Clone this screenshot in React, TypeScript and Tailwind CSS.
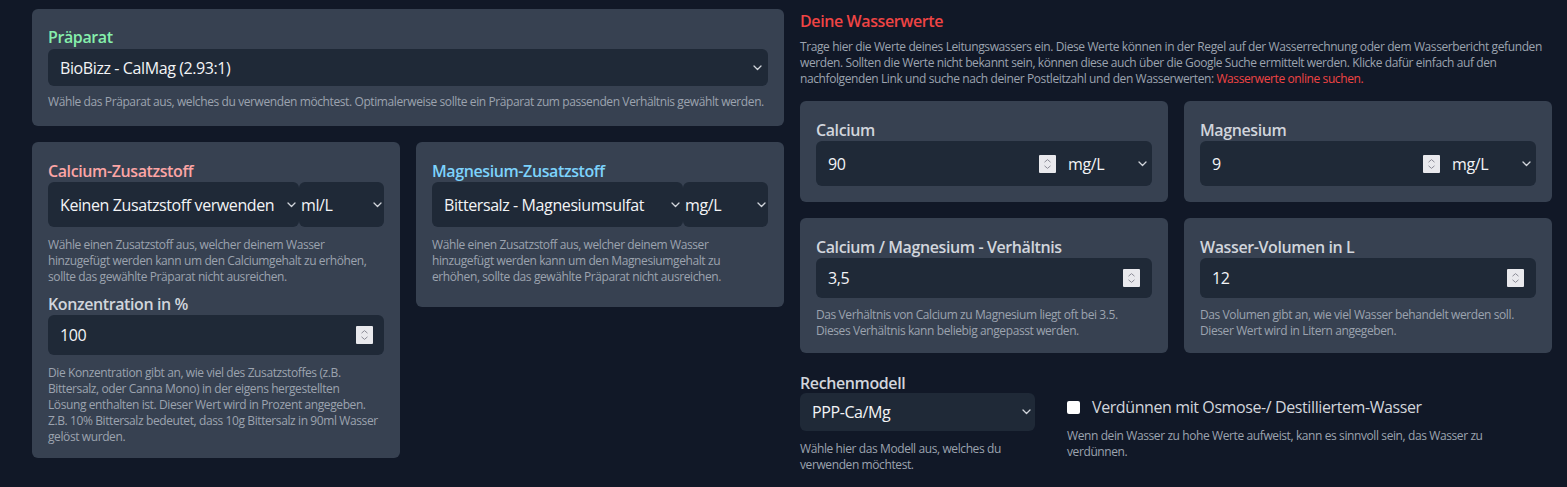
import React from "react";

function Chevron() {
  return (
    <svg width="9" height="6" viewBox="0 0 9 6" aria-hidden="true">
      <path d="M1 1l3.5 3.5L8 1" stroke="#d1d5db" strokeWidth="1.3" fill="none" strokeLinecap="round" strokeLinejoin="round" />
    </svg>
  );
}

function Spinner() {
  return (
    <span className="pointer-events-none flex h-[18px] w-[17px] items-center justify-center rounded-[1px] bg-[#e9e9ed]">
      <svg width="17" height="18" viewBox="0 0 17 18" aria-hidden="true">
        <path d="M5.5 7.2L8.5 4.6l3 2.6" stroke="#8c8c97" strokeWidth="1" fill="none" />
        <path d="M5.5 10.8L8.5 13.4l3-2.6" stroke="#8c8c97" strokeWidth="1" fill="none" />
      </svg>
    </span>
  );
}

function Help({ children, className }: { children: React.ReactNode; className: string }) {
  return <p className={`text-[12px] leading-4 text-[#9ca3af] ${className}`}>{children}</p>;
}

export default function App() {
  return (
    <div className="min-h-screen bg-[#111827] pl-8 pr-[15px] pt-[9px] font-['Open_Sans',sans-serif] tracking-[-0.025em] text-gray-300">
      <div className="flex items-start gap-4">
        {/* LEFT COLUMN */}
        <div className="flex w-[752px] flex-col gap-4">
          <section className="rounded-md bg-[#374151] px-4 pb-4 pt-[18px]">
            <label className="block text-[16px] font-semibold leading-[21px] text-[#86efac]">Präparat</label>
            <div className="relative mt-[1px] h-[37px]">
              <select
                defaultValue="biobizz"
                className="h-full w-full appearance-none rounded-md bg-[#1f2937] pl-3 pr-8 text-[16px] text-gray-100 outline-none"
              >
                <option value="biobizz">BioBizz - CalMag (2.93:1)</option>
              </select>
              <span className="pointer-events-none absolute right-[6px] top-[16px]">
                <Chevron />
              </span>
            </div>
            <Help className="mt-2">
              Wähle das Präparat aus, welches du verwenden möchtest. Optimalerweise sollte ein Präparat zum passenden Verhältnis gewählt werden.
            </Help>
          </section>

          <div className="flex items-start gap-4">
            <section className="w-[368px] rounded-md bg-[#374151] px-4 pb-[13px] pt-[19px]">
              <label className="block text-[16px] font-semibold leading-[21px] text-[#fca5a5]">Calcium-Zusatzstoff</label>
              <div className="flex h-[45px]">
                <div className="relative h-full w-[251px]">
                  <select
                    defaultValue="none"
                    className="h-full w-full appearance-none rounded-md bg-[#1f2937] pl-3 pr-6 text-[16px] text-gray-100 outline-none"
                  >
                    <option value="none">Keinen Zusatzstoff verwenden</option>
                  </select>
                  <span className="pointer-events-none absolute right-[3px] top-[20px]">
                    <Chevron />
                  </span>
                </div>
                <div className="relative h-full flex-1">
                  <select
                    defaultValue="ml"
                    className="h-full w-full appearance-none rounded-md bg-[#1f2937] pl-[2px] pr-6 text-[16px] text-gray-100 outline-none"
                  >
                    <option value="ml">ml/L</option>
                  </select>
                  <span className="pointer-events-none absolute right-[2px] top-[20px]">
                    <Chevron />
                  </span>
                </div>
              </div>
              <Help className="mt-[10px]">
                Wähle einen Zusatzstoff aus, welcher deinem Wasser hinzugefügt werden kann um den Calciumgehalt zu erhöhen, sollte das gewählte Präparat nicht ausreichen.
              </Help>
              <label className="mt-[9px] block text-[16px] font-semibold leading-[21px] text-gray-300">Konzentration in %</label>
              <div className="relative flex h-10 items-center rounded-md bg-[#1f2937]">
                <input
                  type="text"
                  defaultValue="100"
                  className="h-full w-full bg-transparent pl-3 text-[16px] text-gray-100 outline-none"
                />
                <span className="absolute right-[11px] top-[11px]">
                  <Spinner />
                </span>
              </div>
              <Help className="mt-[10px]">
                Die Konzentration gibt an, wie viel des Zusatzstoffes (z.B. Bittersalz, oder Canna Mono) in der eigens hergestellten
                <br />
                Lösung enthalten ist. Dieser Wert wird in Prozent angegeben.
                <br />
                Z.B. 10% Bittersalz bedeutet, dass 10g Bittersalz in 90ml Wasser
                <br />
                gelöst wurden.
              </Help>
            </section>

            <section className="w-[368px] rounded-md bg-[#374151] px-4 pb-[22px] pt-[19px]">
              <label className="block text-[16px] font-semibold leading-[21px] text-[#7dd3fc]">Magnesium-Zusatzstoff</label>
              <div className="flex h-[45px]">
                <div className="relative h-full w-[251px]">
                  <select
                    defaultValue="bitter"
                    className="h-full w-full appearance-none rounded-md bg-[#1f2937] pl-3 pr-6 text-[16px] text-gray-100 outline-none"
                  >
                    <option value="bitter">Bittersalz - Magnesiumsulfat</option>
                  </select>
                  <span className="pointer-events-none absolute right-[3px] top-[20px]">
                    <Chevron />
                  </span>
                </div>
                <div className="relative h-full flex-1">
                  <select
                    defaultValue="mg"
                    className="h-full w-full appearance-none rounded-md bg-[#1f2937] pl-[2px] pr-6 text-[16px] text-gray-100 outline-none"
                  >
                    <option value="mg">mg/L</option>
                  </select>
                  <span className="pointer-events-none absolute right-[2px] top-[20px]">
                    <Chevron />
                  </span>
                </div>
              </div>
              <Help className="mt-[10px]">
                Wähle einen Zusatzstoff aus, welcher deinem Wasser hinzugefügt werden kann um den Magnesiumgehalt zu erhöhen, sollte das gewählte Präparat nicht ausreichen.
              </Help>
            </section>
          </div>
        </div>

        {/* RIGHT COLUMN */}
        <div className="w-[752px]">
          <h2 className="mt-[2px] text-[16px] font-semibold leading-5 text-[#ef4444]">Deine Wasserwerte</h2>
          <div className="mt-2 text-[12px] leading-4 text-[#9ca3af]">
            Trage hier die Werte deines Leitungswassers ein. Diese Werte können in der Regel auf der Wasserrechnung oder dem Wasserbericht gefunden werden. Sollten die Werte nicht bekannt sein, können diese auch über die Google Suche ermittelt werden. Klicke dafür einfach auf den nachfolgenden Link und suche nach deiner Postleitzahl und den Wasserwerten: <span className="text-[#ef4444]">Wasserwerte online suchen.</span>
          </div>

          <div className="mt-[14px] grid grid-cols-2 gap-4">
            {[
              { label: "Calcium", value: "90" },
              { label: "Magnesium", value: "9" },
            ].map((c) => (
              <section key={c.label} className="rounded-md bg-[#374151] px-4 pb-4 pt-[19px]">
                <label className="block text-[16px] font-semibold leading-[21px] text-gray-300">{c.label}</label>
                <div className="flex h-[45px] items-center rounded-md bg-[#1f2937]">
                  <div className="relative h-full flex-1">
                    <input
                      type="text"
                      defaultValue={c.value}
                      className="h-full w-full bg-transparent pl-3 text-[16px] text-gray-100 outline-none"
                    />
                    <span className="absolute right-0 top-[14px]">
                      <Spinner />
                    </span>
                  </div>
                  <div className="relative h-full w-[96px]">
                    <select
                      defaultValue="mg"
                      className="h-full w-full appearance-none bg-transparent pl-3 pr-6 text-[16px] text-gray-100 outline-none"
                    >
                      <option value="mg">mg/L</option>
                    </select>
                    <span className="pointer-events-none absolute right-[5px] top-[20px]">
                      <Chevron />
                    </span>
                  </div>
                </div>
              </section>
            ))}

            {[
              {
                label: "Calcium / Magnesium - Verhältnis",
                value: "3,5",
                help: "Das Verhältnis von Calcium zu Magnesium liegt oft bei 3.5. Dieses Verhältnis kann beliebig angepasst werden.",
              },
              {
                label: "Wasser-Volumen in L",
                value: "12",
                help: "Das Volumen gibt an, wie viel Wasser behandelt werden soll. Dieser Wert wird in Litern angegeben.",
              },
            ].map((c) => (
              <section key={c.label} className="rounded-md bg-[#374151] px-4 pb-[14px] pt-[19px]">
                <label className="block text-[16px] font-semibold leading-[21px] text-gray-300">{c.label}</label>
                <div className="relative h-10 rounded-md bg-[#1f2937]">
                  <input
                    type="text"
                    defaultValue={c.value}
                    className="h-full w-full bg-transparent pl-3 text-[16px] text-gray-100 outline-none"
                  />
                  <span className="absolute right-3 top-[11px]">
                    <Spinner />
                  </span>
                </div>
                <Help className="mt-[9px]">{c.help}</Help>
              </section>
            ))}
          </div>

          <div className="mt-5 flex items-start gap-8">
            <div className="w-[235px]">
              <label className="block text-[16px] font-semibold leading-5 text-gray-300">Rechenmodell</label>
              <div className="relative h-[38px]">
                <select
                  defaultValue="ppp"
                  className="h-full w-full appearance-none rounded-md bg-[#1f2937] pl-3 pr-6 text-[16px] text-gray-100 outline-none"
                >
                  <option value="ppp">PPP-Ca/Mg</option>
                </select>
                <span className="pointer-events-none absolute right-[4px] top-[16px]">
                  <Chevron />
                </span>
              </div>
              <Help className="mt-[10px]">Wähle hier das Modell aus, welches du verwenden möchtest.</Help>
            </div>
            <div className="mt-[22px] w-[440px]">
              <label className="flex h-6 items-center gap-3">
                <input
                  type="checkbox"
                  className="h-[13px] w-[13px] appearance-none rounded-[2px] bg-white"
                />
                <span className="text-[16px] text-gray-300">Verdünnen mit Osmose-/ Destilliertem-Wasser</span>
              </label>
              <Help className="mt-[9px]">
                Wenn dein Wasser zu hohe Werte aufweist, kann es sinnvoll sein, das Wasser zu verdünnen.
              </Help>
            </div>
          </div>
        </div>
      </div>
    </div>
  );
}
